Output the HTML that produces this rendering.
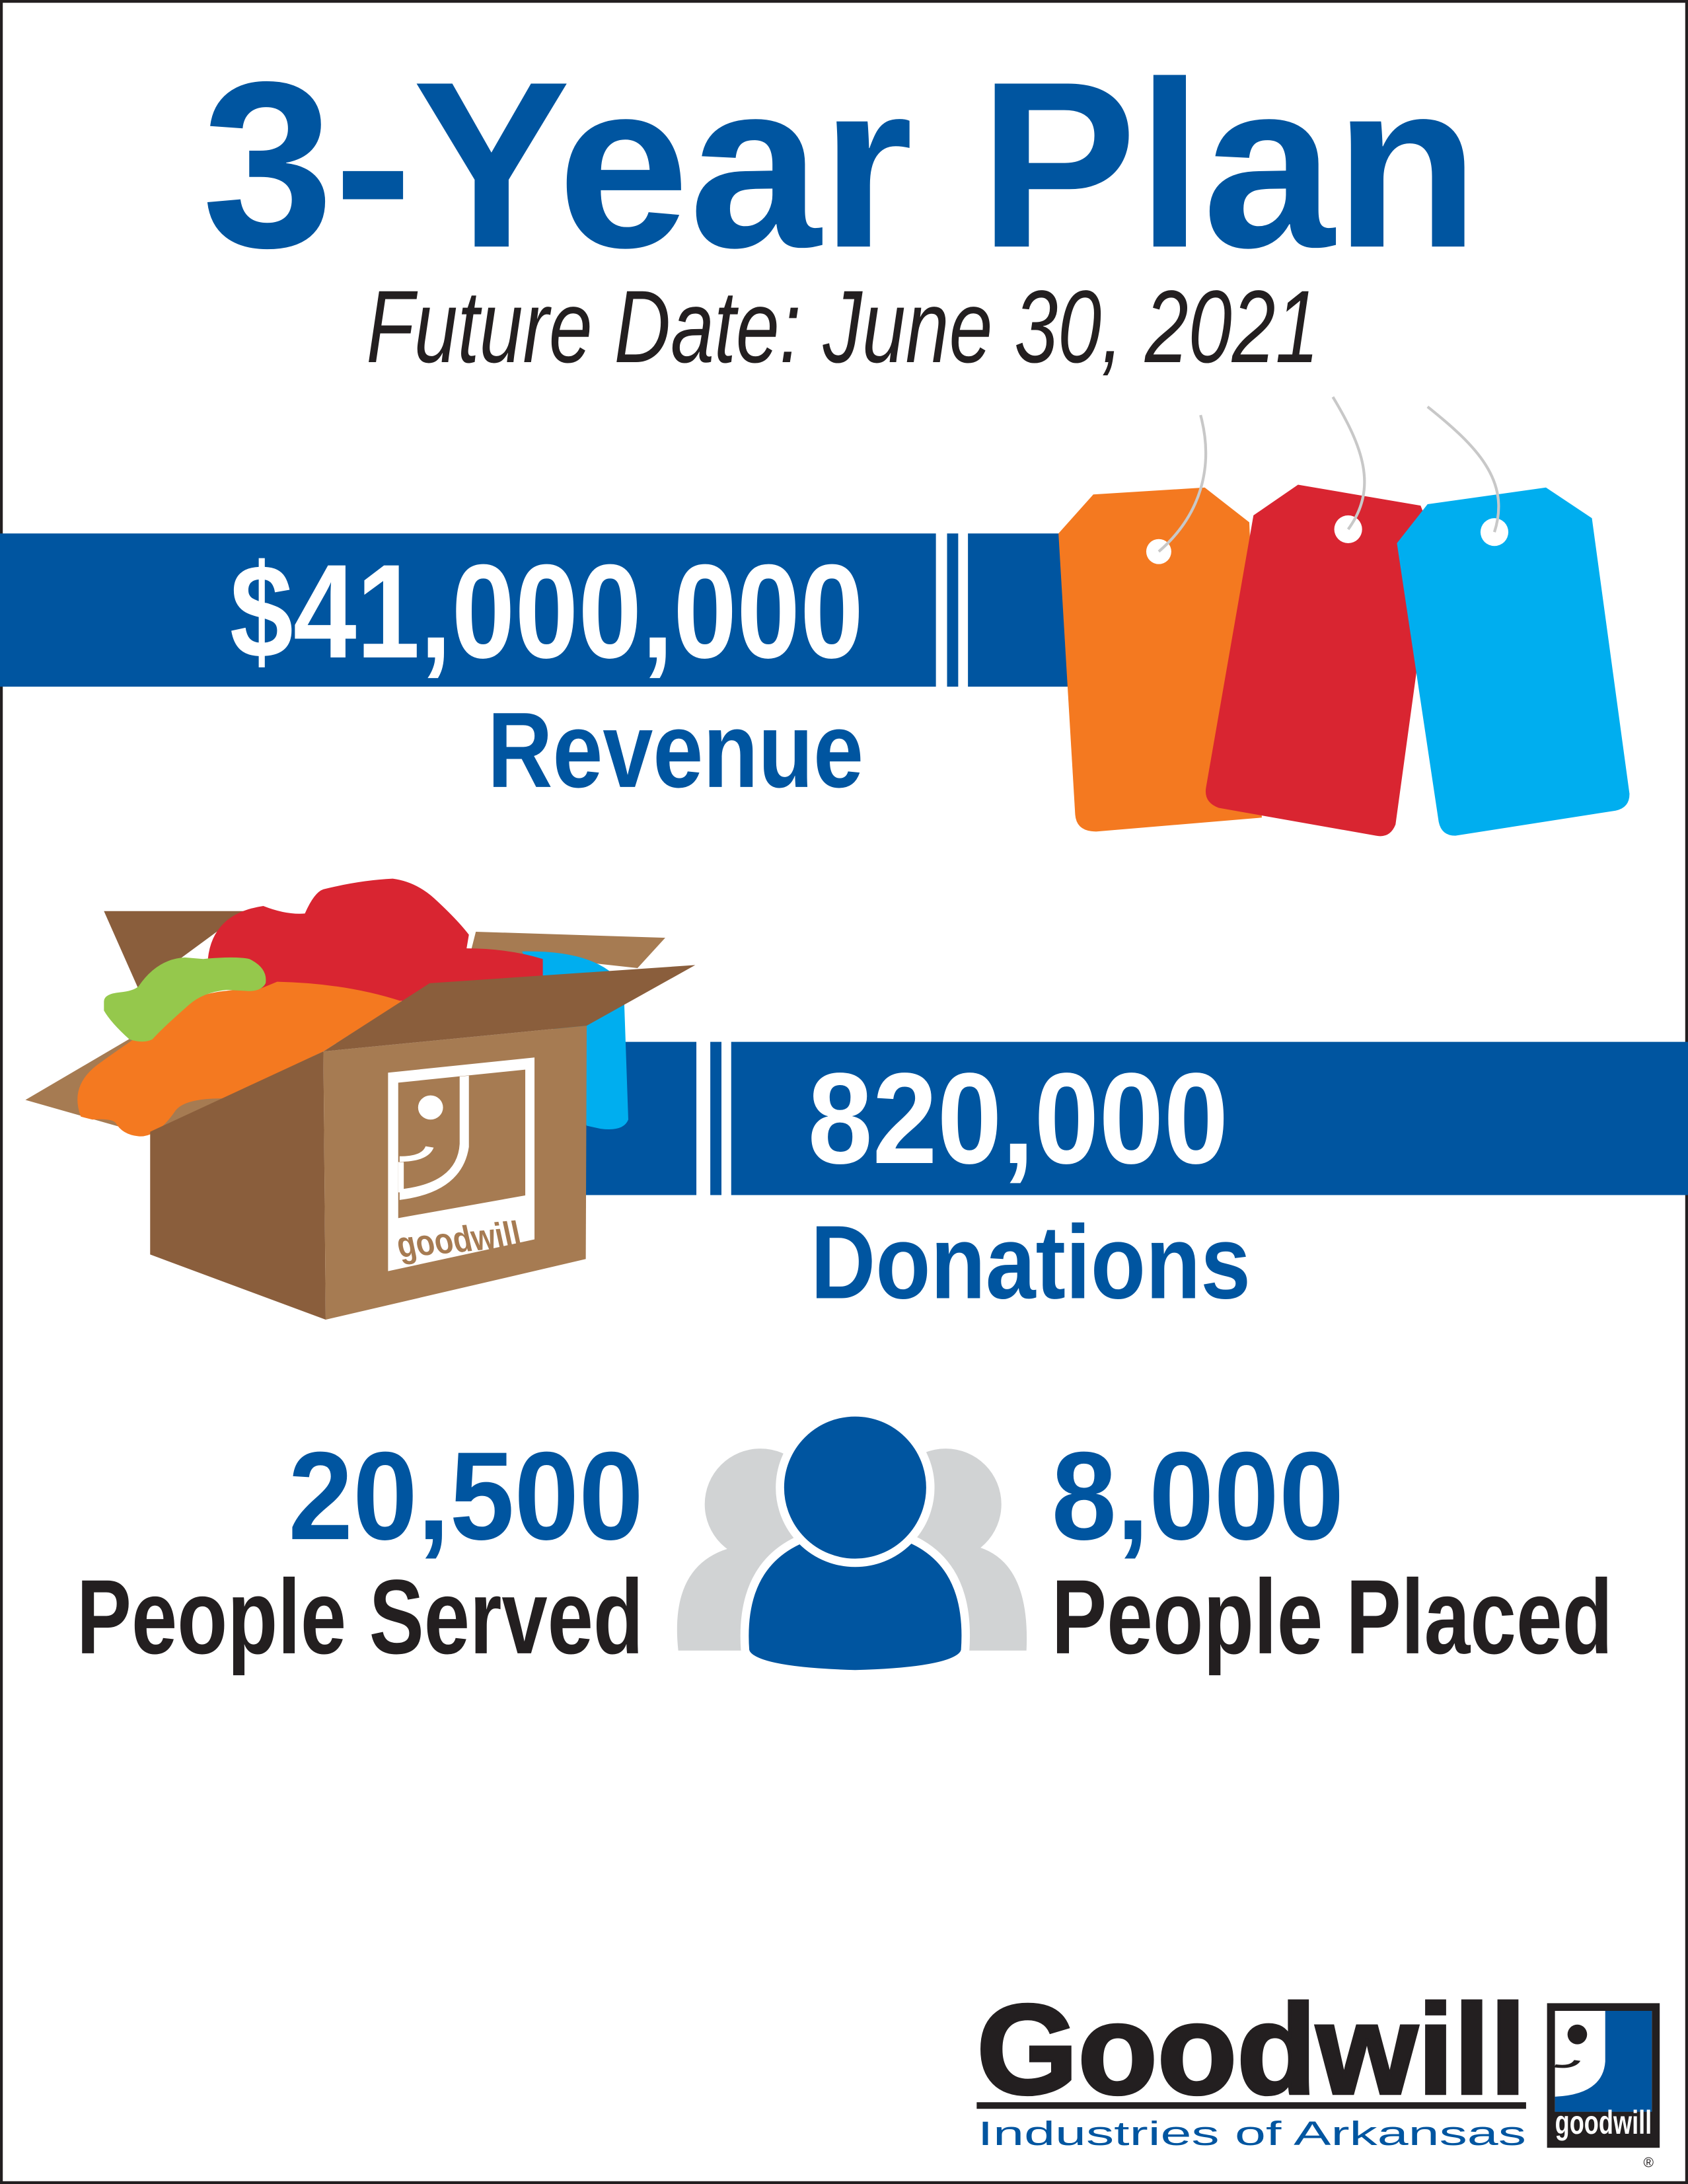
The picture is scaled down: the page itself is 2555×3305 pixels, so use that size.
<!DOCTYPE html>
<html><head><meta charset="utf-8"><style>
html,body{margin:0;padding:0;background:#fff}
svg{display:block}
text{font-family:"Liberation Sans Narrow","Liberation Sans",sans-serif}
</style></head><body>
<svg width="2555" height="3305" viewBox="0 0 1212 1568" preserveAspectRatio="none" xmlns="http://www.w3.org/2000/svg">
<rect x="1" y="1" width="1210" height="1566" fill="#fff" stroke="#231f20" stroke-width="2"/>
<text x="145" y="177" font-size="170" font-weight="bold" fill="#0055a0" textLength="917" lengthAdjust="spacingAndGlyphs" style="font-family:'Liberation Sans',sans-serif">3-Year Plan</text>
<text x="263" y="260" font-size="74" font-style="italic" fill="#231f20" textLength="684" lengthAdjust="spacingAndGlyphs">Future Date: June 30, 2021</text>

<rect x="0" y="383" width="672" height="110" fill="#0055a0"/>
<rect x="680" y="383" width="8" height="110" fill="#0055a0"/>
<rect x="695" y="383" width="80" height="110" fill="#0055a0"/>
<text x="165" y="472" font-size="96" font-weight="bold" fill="#fff" textLength="455" lengthAdjust="spacingAndGlyphs">$41,000,000</text>
<text x="350" y="565" font-size="77" font-weight="bold" fill="#0055a0" textLength="270" lengthAdjust="spacingAndGlyphs">Revenue</text>

<path d="M760 383 L785 355 L865 350 L897 375 L906 587 L787 597 Q773 597 772 585 Z" fill="#f47920"/>
<circle cx="832" cy="396" r="9" fill="#fff"/>
<path d="M862 298 C872 335 862 370 832 396" fill="none" stroke="#c8c8c8" stroke-width="2"/>
<path d="M900 370 L932 348 L1020 363 L1030 388 L1002 592 Q998 602 988 600 L875 580 Q864 576 866 565 Z" fill="#d92531"/>
<circle cx="968" cy="380" r="10" fill="#fff"/>
<path d="M957 285 C978 320 990 350 968 380" fill="none" stroke="#c8c8c8" stroke-width="2"/>
<path d="M1003 390 L1025 362 L1110 350 L1143 372 L1170 570 Q1170 580 1160 582 L1045 600 Q1035 600 1033 590 Z" fill="#00aeef"/>
<circle cx="1073" cy="382" r="10" fill="#fff"/>
<path d="M1025 292 C1060 320 1085 345 1073 382" fill="none" stroke="#c8c8c8" stroke-width="2"/>

<rect x="420" y="748" width="80" height="110" fill="#0055a0"/>
<rect x="510" y="748" width="8" height="110" fill="#0055a0"/>
<rect x="525" y="748" width="687" height="110" fill="#0055a0"/>
<text x="580" y="835" font-size="93" font-weight="bold" fill="#fff" textLength="302" lengthAdjust="spacingAndGlyphs">820,000</text>
<text x="582" y="932" font-size="75" font-weight="bold" fill="#0055a0" textLength="316" lengthAdjust="spacingAndGlyphs">Donations</text>

<g transform="translate(0,616.7) scale(0.3317,0.2176)">
<polygon points="225,172 530,172 300,430" fill="#8a5e3c"/>
<polygon points="1030,240 1440,260 1380,360 1020,300" fill="#a67b52"/>
<path d="M1130 305 Q1300 300 1350 420 L1360 860 Q1350 900 1300 890 L1270 880 L1160 400 Z" fill="#00aeef"/>
<path d="M450 330 Q460 180 570 155 Q620 185 660 180 Q680 110 700 100 Q780 70 850 65 Q900 75 940 130 Q990 200 1015 250 L1010 295 Q1100 295 1175 330 L1175 470 L880 470 L450 420 Z" fill="#d92531"/>
<polygon points="55,795 290,585 700,635 320,910" fill="#a67b52"/>
<path d="M175 850 Q150 750 210 680 Q300 580 430 455 Q470 430 560 430 L600 405 Q750 410 870 470 L700 635 Q620 690 580 730 Q540 780 480 790 Q400 790 380 830 Q340 920 300 915 Q265 910 250 870 Q240 855 200 860 Z" fill="#f47920"/>
<path d="M225 470 Q225 445 260 440 Q290 435 300 420 Q340 330 400 325 L440 330 Q510 320 540 330 Q580 360 575 410 Q565 440 530 435 L490 432 Q440 440 410 480 Q350 560 330 595 Q310 610 280 595 Q240 540 225 500 Z" fill="#95c84c"/>
<polygon points="325,900 700,635 705,1520 325,1305" fill="#8a5e3c"/>
<polygon points="700,635 1270,550 1268,1320 705,1520" fill="#a67b52"/>
<polygon points="700,635 930,410 1505,350 1270,550" fill="#8a5e3c"/>
<polygon points="840,705 1157,655 1157,1255 840,1360" fill="#fff"/>
<polygon points="862,738 1137,695 1137,1110 862,1185" fill="#a67b52"/>
<path d="M995 718 L1015 715 L1015 950 Q1000 1100 865 1125 L865 1090 Q990 1070 995 940 Z" fill="#fff"/>
<ellipse cx="932" cy="820" rx="27" ry="40" fill="#fff"/>
<path d="M865 990 Q920 990 930 950" fill="none" stroke="#fff" stroke-width="18"/>
<rect x="862" y="1000" width="12" height="100" fill="#fff"/>
<text x="865" y="1315" font-size="120" font-weight="bold" fill="#a67b52" transform="rotate(-8 865 1315)" textLength="270" lengthAdjust="spacingAndGlyphs">goodwill</text>
</g>

<g fill="#d1d3d4">
<circle cx="546" cy="1080" r="40"/>
<path d="M487 1185 Q480 1120 530 1110 L565 1110 Q600 1120 600 1185 Z"/>
<circle cx="679" cy="1080" r="40"/>
<path d="M624 1185 Q625 1120 660 1110 L700 1110 Q740 1120 737 1185 Z"/>
</g>
<path d="M535 1185 Q530 1115 590 1100 L640 1100 Q698 1115 693 1185 Q690 1200 614 1202 Q538 1200 535 1185 Z" fill="#0055a0" stroke="#fff" stroke-width="6"/>
<circle cx="614" cy="1068" r="54" fill="#0055a0" stroke="#fff" stroke-width="6"/>

<text x="207" y="1105" font-size="90" font-weight="bold" fill="#0055a0" textLength="255" lengthAdjust="spacingAndGlyphs">20,500</text>
<text x="55" y="1187" font-size="76" font-weight="bold" fill="#231f20" textLength="407" lengthAdjust="spacingAndGlyphs">People Served</text>
<text x="755" y="1105" font-size="90" font-weight="bold" fill="#0055a0" textLength="210" lengthAdjust="spacingAndGlyphs">8,000</text>
<text x="755" y="1187" font-size="76" font-weight="bold" fill="#231f20" textLength="403" lengthAdjust="spacingAndGlyphs">People Placed</text>

<g transform="translate(687.9,1413.7) scale(0.3343,0.158)">
<text x="40" y="565" font-size="580" font-weight="bold" fill="#231f20" stroke="#231f20" stroke-width="14" textLength="1180" lengthAdjust="spacingAndGlyphs" style="font-family:'Liberation Sans',sans-serif">Goodwill</text>
<rect x="40" y="605" width="1180" height="30" fill="#231f20"/>
<text x="42" y="800" font-size="152" fill="#0055a0" textLength="1178" lengthAdjust="spacingAndGlyphs" style="font-family:'Liberation Sans',sans-serif">Industries of Arkansas</text>
<rect x="1265" y="155" width="242" height="657" fill="#231f20"/>
<rect x="1282" y="190" width="208" height="458" fill="#fff"/>
<path d="M1390 190 H1490 V648 H1282 V580 Q1385 570 1390 420 Z" fill="#0055a0"/>
<ellipse cx="1330" cy="297" rx="21" ry="45" fill="#231f20"/>
<path d="M1282 440 Q1320 450 1330 415" fill="none" stroke="#231f20" stroke-width="14"/>
<text x="1282" y="748" font-size="150" font-weight="bold" fill="#fff" textLength="208" lengthAdjust="spacingAndGlyphs">goodwill</text>
</g>
<text x="1180" y="1556" font-size="10" fill="#231f20" style="font-family:'Liberation Sans',sans-serif">®</text>
</svg>
</body></html>
